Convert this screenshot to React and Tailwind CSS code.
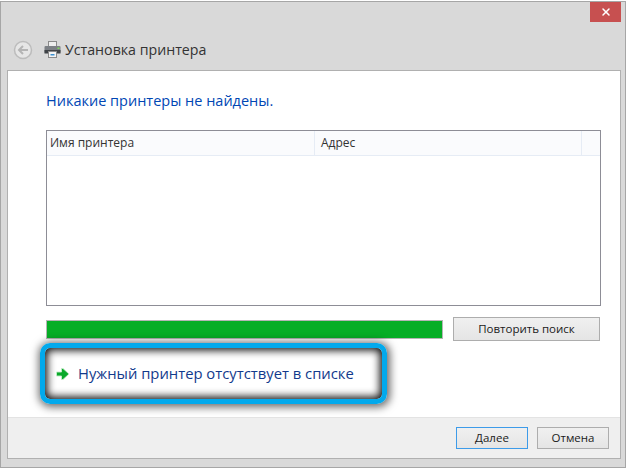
import { X } from 'lucide-react';

const font = { fontFamily: '"Open Sans", "Noto Sans", sans-serif' };

function PrinterIcon() {
  return (
    <svg width="17" height="17" viewBox="0 0 17 17">
      <rect x="4.5" y="0.5" width="8" height="5" fill="#eeeeee" stroke="#8a8a8a" />
      <rect x="0.5" y="5" width="16" height="7" rx="1" fill="#7c8085" />
      <rect x="0.5" y="9" width="16" height="3.5" fill="#3f4347" />
      <rect x="13.5" y="6.5" width="2" height="1.5" fill="#7ed957" />
      <rect x="4.5" y="10.5" width="8" height="6" fill="#f4f4f4" stroke="#8a8a8a" />
      <rect x="6.5" y="13" width="4" height="1.5" fill="#3a8fd0" />
    </svg>
  );
}

function BackIcon() {
  return (
    <svg width="20" height="20" viewBox="0 0 20 20">
      <circle cx="10" cy="10" r="8.5" fill="#e6e6e6" stroke="#bcbcbc" strokeWidth="1.5" />
      <path d="M15 10H6.5M10 6l-4 4 4 4" fill="none" stroke="#b4b4b4" strokeWidth="2" />
    </svg>
  );
}

function GreenArrow() {
  return (
    <svg width="15" height="14" viewBox="0 0 15 14">
      <path d="M1.5 5h5V1.5h1.5L14 7l-6 5.5H6.500V9h-5z" fill="#09a92a" stroke="#c4ecca" strokeWidth="0.9" strokeLinejoin="round" />
    </svg>
  );
}

function Btn({ children, className = '' }) {
  return (
    <button className={`border bg-gradient-to-b from-[#f0f0f0] to-[#e5e5e5] text-[11.5px] text-[#1a1a1a] ${className}`}>
      {children}
    </button>
  );
}

export default function App() {
  return (
    <div className="w-[627px] h-[470px] bg-white overflow-hidden" style={font}>
      <div className="w-[626px] h-[467px] bg-[#d9d9d9] border border-[#a6a6a6] mt-px flex flex-col">
        <div className="h-[68px] flex flex-col shrink-0">
          <div className="flex justify-end pr-[4px]">
            <div className="w-[31px] h-5 bg-[#c75050] flex items-center justify-center">
              <X size={12} strokeWidth={3} color="#fff" />
            </div>
          </div>
          <div className="flex items-center mt-[17px] pl-[12px]">
            <BackIcon />
            <span className="ml-[11px] flex"><PrinterIcon /></span>
            <span className="ml-[4px] text-[14.2px] text-[#333]">Установка принтера</span>
          </div>
        </div>

        <div className="w-[614px] ml-[6px] h-[389px] bg-white border border-[#b0b0b0] flex flex-col">
          <div className="flex-1 pl-[38px] pr-[19px] flex flex-col">
            <div className="mt-[20px] text-[14.5px] leading-5 text-[#0046b4]">Никакие принтеры не найдены.</div>
            <div className="mt-[19px] h-[176px] border border-[#8d8d96]">
              <div className="h-[25px] flex text-[12px] text-[#333] bg-[#fafbfd] border-b border-[#e6ecf5]">
                <div className="w-[268px] pl-[3px] flex items-center border-r border-[#e6ecf5]">Имя принтера</div>
                <div className="w-[267px] pl-[6px] flex items-center border-r border-[#e6ecf5]">Адрес</div>
              </div>
            </div>
            <div className="mt-[11px] flex items-center">
              <div className="w-[397px] h-[19px] bg-[#06ae26] border border-[#b5b5b5]" />
              <Btn className="ml-[10px] w-[147px] h-6 border-[#adadad]">Повторить поиск</Btn>
            </div>
            <div className="mt-[2px] -ml-[6px] w-[347px] h-[61px] rounded-[10px] border-[5px] border-[#02a9ec] shadow-[inset_0_0_8px_2px_#000,1px_1px_8px_2px_rgba(0,0,0,0.6)] flex items-center pl-[10px]">
              <GreenArrow />
              <span className="ml-[8px] text-[14.8px] text-[#123a8c]">Нужный принтер отсутствует в списке</span>
            </div>
          </div>
          <div className="h-[41px] bg-[#efefef] border-t border-[#e3e3e3] flex items-center justify-end gap-[9px] pr-[11px] shrink-0">
            <Btn className="w-[72px] h-[22px] border-[#3d9be9]">Далее</Btn>
            <Btn className="w-[72px] h-[22px] border-[#adadad]">Отмена</Btn>
          </div>
        </div>
      </div>
    </div>
  );
}
